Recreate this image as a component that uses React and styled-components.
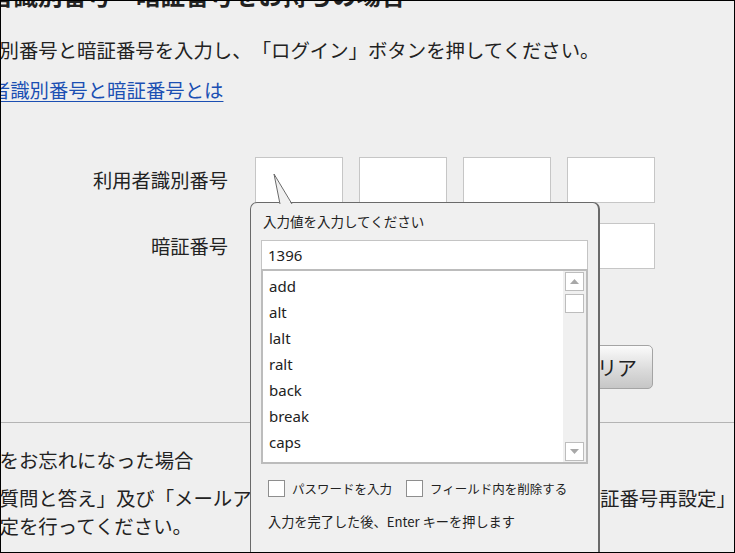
import React from 'react';
import styled, { createGlobalStyle } from 'styled-components';

const GlobalStyle = createGlobalStyle`
  html, body {
    margin: 0;
    padding: 0;
    background: #ffffff;
  }
  body {
    font-family: "Noto Sans CJK JP", "Noto Sans", sans-serif;
    text-spacing-trim: space-all;
  }
`;

const Frame = styled.div`
  position: relative;
  width: 735px;
  height: 553px;
  box-sizing: border-box;
  border: 1px solid #000;
  background: #efefef;
  overflow: hidden;
  color: #222;
  font-family: "Noto Sans CJK JP", sans-serif;
`;

// page is scrolled sideways, so the left part of every line is hidden
const Content = styled.div`
  margin-left: -77px;
`;

const Heading = styled.h2`
  margin: -22px 0 0 16px;
  font-size: 24.5px;
  line-height: 32px;
  font-weight: bold;
  white-space: nowrap;
`;

const Line = styled.p`
  margin: ${p => p.$top || 0}px 0 0 ${p => p.$left || 0}px;
  font-size: 19.4px;
  line-height: 28px;
  white-space: nowrap;
`;

const HelpLink = styled.a`
  color: #1b4fb3;
  text-decoration: underline;
  text-underline-offset: 3px;
  cursor: pointer;
`;

const FormGrid = styled.div`
  display: grid;
  grid-template-columns: 315px repeat(4, 88px);
  column-gap: 16px;
  row-gap: 20px;
  margin-top: 53px;
`;

const Label = styled.div`
  display: flex;
  align-items: center;
  justify-content: flex-end;
  padding-right: 11px;
  font-size: 19.3px;
  white-space: nowrap;
`;

const Box = styled.div`
  height: 46px;
  box-sizing: border-box;
  background: #fff;
  border: 1px solid #c6c6c6;
`;

const ButtonRow = styled.div`
  grid-column: 2 / -1;
  display: flex;
  justify-content: flex-end;
  gap: 14px;
  margin: 56px 2px 0 0;
`;

const Button = styled.button`
  height: 44px;
  padding: 0 15px;
  border: 1px solid #a4a4a4;
  border-radius: 5px;
  background: linear-gradient(to bottom, #fbfbfb, #d9d9d9 60%, #c6c6c6);
  font-family: "Noto Sans CJK JP", sans-serif;
  font-size: 20px;
  color: #222;
`;

const Divider = styled.hr`
  margin: 33px 0 0;
  border: 0;
  border-top: 1px solid #b4b4b4;
`;

/* popup */

const Popup = styled.div`
  position: absolute;
  top: 201px;
  left: 249px;
  width: 350px;
  height: 400px;
  box-sizing: border-box;
  padding: 8px 10px 0;
  background: #f0f0f0;
  border-style: solid;
  border-color: #6a6a6a;
  border-width: 1px 2px 1px 1px;
  border-radius: 7px 7px 0 0;
  font-family: "Noto Sans CJK JP", sans-serif;
  color: #222;
`;

const Tail = styled.svg`
  position: absolute;
  top: -29px;
  left: -1px;
  overflow: visible;
`;

const PopupTitle = styled.div`
  margin-left: 2px;
  font-size: 13.5px;
  line-height: 20px;
`;

const ValueInput = styled.div`
  margin-top: 9px;
  height: 29px;
  box-sizing: border-box;
  padding-left: 6px;
  display: flex;
  align-items: center;
  background: #fff;
  border: 1px solid #c4c4c4;
  border-bottom: none;
  font-family: "Noto Sans", sans-serif;
  font-size: 15px;
`;

const ListBox = styled.div`
  display: flex;
  height: 195px;
  box-sizing: border-box;
  background: #fff;
  border: 2px solid #bcbcbc;
  overflow: hidden;
`;

const Items = styled.ul`
  flex: 1;
  margin: 0;
  padding: 2px 0 0 6px;
  list-style: none;
  font-family: "Noto Sans", sans-serif;
  font-size: 15px;
`;

const Item = styled.li`
  height: 26px;
  line-height: 26px;
`;

const ScrollTrack = styled.div`
  width: 23px;
  display: flex;
  flex-direction: column;
  align-items: flex-start;
  padding: 1px 0 1px 2px;
  box-sizing: border-box;
  background: #f0f0f0;
`;

const ScrollBtn = styled.div`
  width: 19px;
  height: 19px;
  box-sizing: border-box;
  display: flex;
  align-items: center;
  justify-content: center;
  background: #fff;
  border: 1px solid #bdbdbd;
  margin-top: ${p => p.$gap || 0}px;
  ${p => p.$bottom && 'margin-top: auto;'}
`;

const CheckRow = styled.div`
  display: flex;
  align-items: center;
  margin: 14px 0 0 7px;
  height: 20px;
  font-size: 12.5px;
`;

const CheckOption = styled.label`
  display: flex;
  align-items: center;
  gap: 7px;
  margin-right: 14px;
  white-space: nowrap;
`;

const CheckBox = styled.span`
  width: 17px;
  height: 17px;
  box-sizing: border-box;
  background: #fff;
  border: 1px solid #8e8e8e;
`;

const Hint = styled.div`
  margin: 14px 0 0 7px;
  font-size: 13.2px;
  line-height: 20px;
  white-space: nowrap;
`;

const Arrow = ({ up }) => (
  <svg width="9" height="5" viewBox="0 0 9 5">
    <polygon points={up ? '0,5 4.5,0 9,5' : '0,0 4.5,5 9,0'} fill="#a8a8a8" />
  </svg>
);

const keys = ['add', 'alt', 'lalt', 'ralt', 'back', 'break', 'caps', 'ctrl'];

export default function App() {
  return (
    <>
      <GlobalStyle />
      <Frame>
        <Content>
          <Heading>利用者識別番号・暗証番号をお持ちの場合</Heading>
          <Line $top={25} $left={-2}>利用者識別番号と暗証番号を入力し、「ログイン」ボタンを押してください。</Line>
          <Line $top={12} $left={28}>
            <HelpLink>利用者識別番号と暗証番号とは</HelpLink>
          </Line>

          <FormGrid>
            <Label>利用者識別番号</Label>
            <Box /><Box /><Box /><Box />
            <Label>暗証番号</Label>
            <Box /><Box /><Box /><Box />
            <ButtonRow>
              <Button>ログイン</Button>
              <Button>クリア</Button>
            </ButtonRow>
          </FormGrid>

          <Divider />

          <Line $top={23} $left={-2}>暗証番号をお忘れになった場合</Line>
          <Line $top={10} $left={-2}>「秘密の質問と答え」及び「メールアドレスによる再設定」または「利用者暗証番号再設定」</Line>
          <Line $left={-2}>番号再設定を行ってください。</Line>
        </Content>

        <Popup>
          <Tail width="50" height="31" viewBox="0 0 50 31">
            <polygon points="30,31 24,0 42,31" fill="#f0f0f0" />
            <polyline points="30,30 24,0 42,30" fill="none" stroke="#6a6a6a" strokeWidth="1" />
          </Tail>
          <PopupTitle>入力値を入力してください</PopupTitle>
          <ValueInput>1396</ValueInput>
          <ListBox>
            <Items>
              {keys.map(k => <Item key={k}>{k}</Item>)}
            </Items>
            <ScrollTrack>
              <ScrollBtn><Arrow up /></ScrollBtn>
              <ScrollBtn $gap={3} />
              <ScrollBtn $bottom><Arrow /></ScrollBtn>
            </ScrollTrack>
          </ListBox>
          <CheckRow>
            <CheckOption><CheckBox />パスワードを入力</CheckOption>
            <CheckOption><CheckBox />フィールド内を削除する</CheckOption>
          </CheckRow>
          <Hint>入力を完了した後、Enter キーを押します</Hint>
        </Popup>
      </Frame>
    </>
  );
}
